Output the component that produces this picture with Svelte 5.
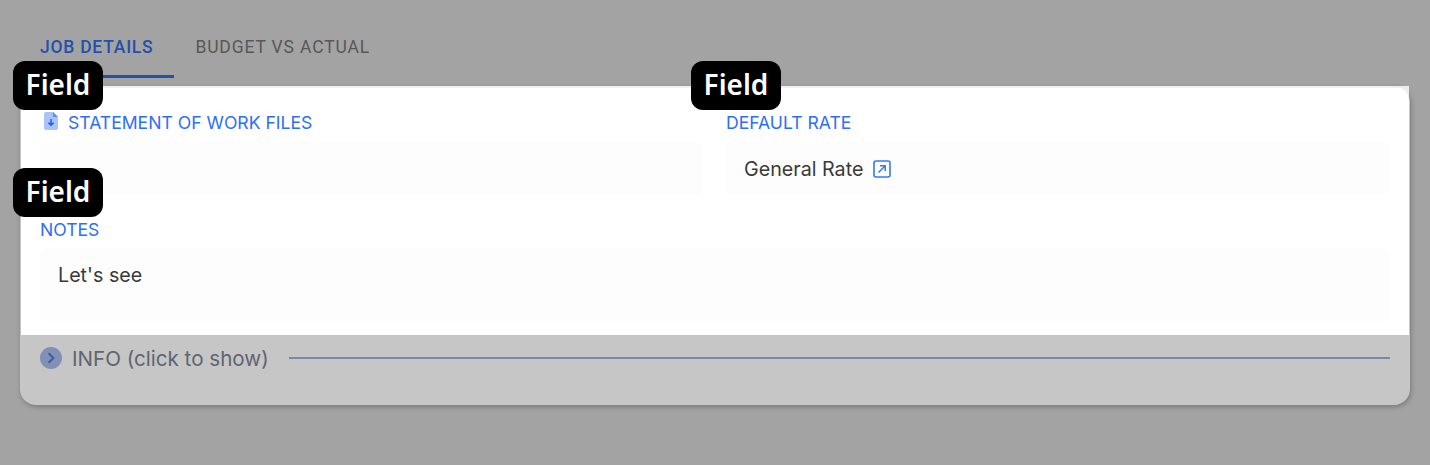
<script lang="ts">
	const tabs = [
		{ label: "JOB DETAILS", active: true },
		{ label: "BUDGET VS ACTUAL", active: false }
	];
</script>

<div class="page">
	<div class="tabs">
		{#each tabs as tab}
			<div class="tab" class:active={tab.active}>{tab.label}</div>
		{/each}
	</div>

	<div class="card">
		<div class="spot">
			<span class="corner"></span>
			<div class="fields">
				<div class="field">
					<span class="badge">Field</span>
					<div class="label">
						<svg class="file" width="16" height="18" viewBox="0 0 16 18">
							<path d="M3 0h7l5 5v11a2 2 0 0 1-2 2H3a2 2 0 0 1-2-2V2a2 2 0 0 1 2-2z" fill="#a9c3fb" />
							<path d="M10 0l5 5h-5z" fill="#5f8ff5" />
							<path d="M8 7v6M5.4 10.6L8 13.2l2.6-2.6" fill="none" stroke="#1f62e8" stroke-width="1.5" />
						</svg>
						STATEMENT OF WORK FILES
					</div>
					<div class="value"></div>
				</div>
				<div class="field second">
					<span class="badge">Field</span>
					<div class="label">DEFAULT RATE</div>
					<div class="value">
						General Rate
						<svg class="open" width="18" height="18" viewBox="0 0 18 18">
							<rect x="1" y="1" width="16" height="16" rx="2" fill="none" stroke="#3478f6" stroke-width="1.6" />
							<path d="M5.5 12.5L12 6M7 5.8h5.2V11" fill="none" stroke="#3478f6" stroke-width="1.5" />
						</svg>
					</div>
				</div>
				<div class="field wide">
					<span class="badge">Field</span>
					<div class="label">NOTES</div>
					<div class="value tall">Let's see</div>
				</div>
			</div>
		</div>

		<div class="info">
			<span class="toggle">
				<svg width="22" height="22" viewBox="0 0 22 22">
					<circle cx="11" cy="11" r="11" fill="#8290b5" />
					<path d="M8.6 6.2l4.8 4.8-4.8 4.8" fill="none" stroke="#3f5ba8" stroke-width="2" />
				</svg>
			</span>
			<span class="info-text">INFO (click to show)</span>
			<span class="rule"></span>
		</div>
	</div>
</div>

<style>
	:global(body) {
		margin: 0;
		background: #a3a3a3;
	}

	* {
		box-sizing: border-box;
	}

	.page {
		height: 465px;
		padding: 20px 20px 0 20px;
		overflow: hidden;
		font-family: Inter, "Liberation Sans", sans-serif;
	}

	.tabs {
		display: flex;
		height: 58px;
	}

	.tab {
		height: 58px;
		padding: 0 21px;
		font-family: Roboto, "Liberation Sans", sans-serif;
		font-size: 17.5px;
		font-weight: 400;
		letter-spacing: 0.85px;
		line-height: 54px;
		color: #585858;
	}

	.tab.active {
		padding: 0 21px 0 20px;
		font-weight: 500;
		letter-spacing: 0.75px;
		color: #2450ab;
		border-bottom: 3px solid #2450ab;
	}

	.card {
		margin-top: 8px;
		height: 319px;
		width: 1390px;
		border-radius: 0 16px 16px 16px;
		background: #c6c6c6;
		box-shadow: 1px 2px 5px rgba(0, 0, 0, 0.25);
	}

	.spot {
		position: relative;
		height: 249px;
		margin: 0 1px;
		background: #fff;
		border-top: 2px solid #f0f0f0;
		padding: 15px 19px 0 19px;
	}

	.corner {
		position: absolute;
		top: -2px;
		right: 0;
		width: 14px;
		height: 14px;
		background: radial-gradient(circle at 0 100%, transparent 13px, #ececec 14px);
	}

	.fields {
		display: grid;
		grid-template-columns: 663px 664px;
		column-gap: 23px;
		row-gap: 14px;
	}

	.field {
		position: relative;
	}

	.wide {
		grid-column: 1 / span 2;
	}

	.label {
		display: flex;
		align-items: center;
		gap: 9px;
		height: 39px;
		padding-top: 1px;
		font-size: 17.6px;
		line-height: 20px;
		color: #2b6ffa;
	}

	.wide .label {
		padding-top: 2px;
	}

	.file {
		margin: -4px 0 0 3px;
	}

	.value {
		display: flex;
		align-items: center;
		gap: 10px;
		background: #fdfdfd;
		border-radius: 6px;
		padding: 0 18px;
		font-size: 19.7px;
		color: #3a3a3a;
		height: 53px;
	}

	.tall {
		height: 73px;
		align-items: flex-start;
		padding-top: 16px;
		line-height: 22px;
	}

	.badge {
		position: absolute;
		left: -27px;
		top: -42px;
		width: 90px;
		height: 49px;
		padding-bottom: 3px;
		border-radius: 12px;
		background: #000;
		color: #fff;
		font-family: "Noto Sans", sans-serif;
		font-size: 28px;
		font-weight: 600;
		display: flex;
		align-items: center;
		justify-content: center;
	}

	.second .badge {
		left: -35px;
	}

	.wide .badge {
		top: -41px;
	}

	.info {
		display: flex;
		align-items: center;
		gap: 10px;
		height: 46px;
		padding: 0 20px;
	}

	.toggle {
		display: flex;
		width: 22px;
		margin-top: -1px;
	}

	.info-text {
		font-size: 20.6px;
		color: #5f6571;
	}

	.rule {
		flex: 1;
		margin-left: 10px;
		height: 1.5px;
		background: #7c88a8;
	}
</style>
